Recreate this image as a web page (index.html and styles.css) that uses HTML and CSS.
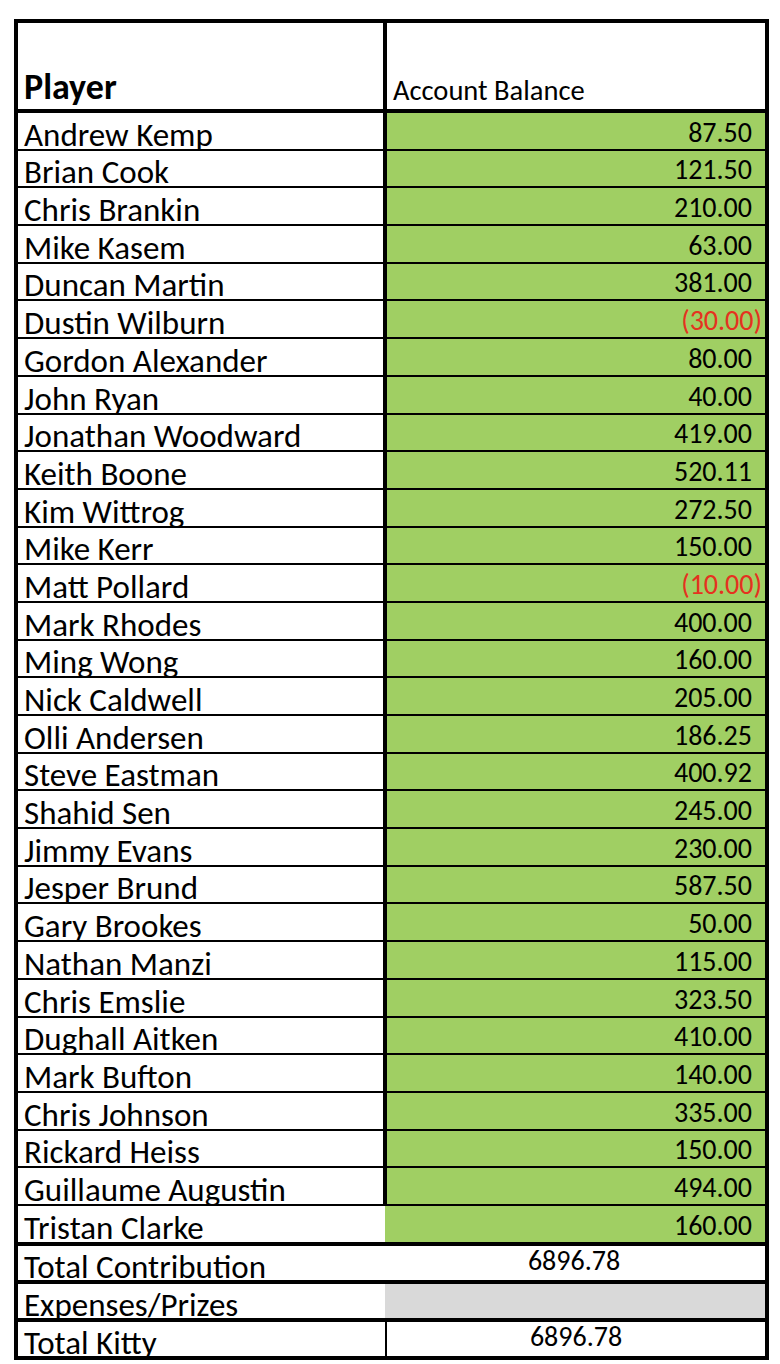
FILE: index.html
```html
<!DOCTYPE html>
<html lang="en">
<head>
<meta charset="utf-8">
<title>Account Balances</title>
<link rel="stylesheet" href="styles.css">
</head>
<body>
<div class="sheet">
  <div class="row row--head">
    <div class="name"><span class="txt txt--player">Player</span></div>
    <div class="val val--head"><span class="txt txt--label">Account Balance</span></div>
  </div>

  <div class="row"><div class="name"><span class="txt">Andrew Kemp</span></div><div class="val"><span class="num">87.50</span></div></div>
  <div class="row"><div class="name"><span class="txt">Brian Cook</span></div><div class="val"><span class="num">121.50</span></div></div>
  <div class="row"><div class="name"><span class="txt">Chris Brankin</span></div><div class="val"><span class="num">210.00</span></div></div>
  <div class="row"><div class="name"><span class="txt">Mike Kasem</span></div><div class="val"><span class="num">63.00</span></div></div>
  <div class="row"><div class="name"><span class="txt">Duncan Martin</span></div><div class="val"><span class="num">381.00</span></div></div>
  <div class="row"><div class="name"><span class="txt">Dustin Wilburn</span></div><div class="val"><span class="num num--neg">(30.00)</span></div></div>
  <div class="row"><div class="name"><span class="txt">Gordon Alexander</span></div><div class="val"><span class="num">80.00</span></div></div>
  <div class="row"><div class="name"><span class="txt">John Ryan</span></div><div class="val"><span class="num">40.00</span></div></div>
  <div class="row"><div class="name"><span class="txt">Jonathan Woodward</span></div><div class="val"><span class="num">419.00</span></div></div>
  <div class="row"><div class="name"><span class="txt">Keith Boone</span></div><div class="val"><span class="num">520.11</span></div></div>
  <div class="row"><div class="name"><span class="txt">Kim Wittrog</span></div><div class="val"><span class="num">272.50</span></div></div>
  <div class="row"><div class="name"><span class="txt">Mike Kerr</span></div><div class="val"><span class="num">150.00</span></div></div>
  <div class="row"><div class="name"><span class="txt">Matt Pollard</span></div><div class="val"><span class="num num--neg">(10.00)</span></div></div>
  <div class="row"><div class="name"><span class="txt">Mark Rhodes</span></div><div class="val"><span class="num">400.00</span></div></div>
  <div class="row"><div class="name"><span class="txt">Ming Wong</span></div><div class="val"><span class="num">160.00</span></div></div>
  <div class="row"><div class="name"><span class="txt">Nick Caldwell</span></div><div class="val"><span class="num">205.00</span></div></div>
  <div class="row"><div class="name"><span class="txt">Olli Andersen</span></div><div class="val"><span class="num">186.25</span></div></div>
  <div class="row"><div class="name"><span class="txt">Steve Eastman</span></div><div class="val"><span class="num">400.92</span></div></div>
  <div class="row"><div class="name"><span class="txt">Shahid Sen</span></div><div class="val"><span class="num">245.00</span></div></div>
  <div class="row"><div class="name"><span class="txt">Jimmy Evans</span></div><div class="val"><span class="num">230.00</span></div></div>
  <div class="row"><div class="name"><span class="txt">Jesper Brund</span></div><div class="val"><span class="num">587.50</span></div></div>
  <div class="row"><div class="name"><span class="txt">Gary Brookes</span></div><div class="val"><span class="num">50.00</span></div></div>
  <div class="row"><div class="name"><span class="txt">Nathan Manzi</span></div><div class="val"><span class="num">115.00</span></div></div>
  <div class="row"><div class="name"><span class="txt">Chris Emslie</span></div><div class="val"><span class="num">323.50</span></div></div>
  <div class="row"><div class="name"><span class="txt">Dughall Aitken</span></div><div class="val"><span class="num">410.00</span></div></div>
  <div class="row"><div class="name"><span class="txt">Mark Bufton</span></div><div class="val"><span class="num">140.00</span></div></div>
  <div class="row"><div class="name"><span class="txt">Chris Johnson</span></div><div class="val"><span class="num">335.00</span></div></div>
  <div class="row"><div class="name"><span class="txt">Rickard Heiss</span></div><div class="val"><span class="num">150.00</span></div></div>
  <div class="row"><div class="name"><span class="txt">Guillaume Augustin</span></div><div class="val"><span class="num">494.00</span></div></div>
  <div class="row row--last"><div class="name"><span class="txt">Tristan Clarke</span></div><div class="val val--open"><span class="num">160.00</span></div></div>

  <div class="row row--total"><div class="name"><span class="txt txt--total">Total Contribution</span></div><div class="val val--sum"><span class="num num--center">6896.78</span></div></div>
  <div class="row row--total"><div class="name"><span class="txt txt--total">Expenses/Prizes</span></div><div class="val val--open val--grey"></div></div>
  <div class="row row--total row--end"><div class="name"><span class="txt txt--total">Total Kitty</span></div><div class="val val--sum val--thin"><span class="num num--center">6896.78</span></div></div>
</div>
</body>
</html>
```

FILE: styles.css
```css
html, body {
  margin: 0;
  padding: 0;
  background: #ffffff;
}

body {
  font-family: Carlito, Calibri, Lato, "Liberation Sans", sans-serif;
  color: #000000;
}

.sheet {
  margin: 19px 0 0 14px;
  width: 755px;
  border: 4px solid #000000;
  box-sizing: border-box;
}

.row {
  display: grid;
  grid-template-columns: 365px 1fr;
  height: 37.7px;
  border-bottom: 2px solid #000000;
  box-sizing: border-box;
}

.row--head {
  height: 90px;
  border-bottom-width: 4px;
}

.row--last {
  height: 39.7px;
  border-bottom-width: 4px;
}

.row--total {
  height: 38px;
  border-bottom-width: 4px;
}

.row--end {
  height: 34px;
  border-bottom: 0;
}

.name,
.val {
  display: flex;
  align-items: flex-end;
  min-width: 0;
}

.name {
  padding-left: 6px;
}

.val {
  background: #a0cf63;
  border-left: 4px solid #000000;
  justify-content: flex-end;
  padding-right: 3px;
}

.val--head {
  background: #ffffff;
  justify-content: flex-start;
  padding-left: 6px;
}

.val--open {
  border-left: 0;
  margin-left: 2px;
}

.val--grey {
  background: #d9d9d9;
}

.val--sum {
  background: #ffffff;
  border-left: 0;
  justify-content: center;
  padding-right: 0;
}

.val--thin {
  margin-left: 2px;
  border-left: 2px solid #000000;
}

.txt {
  font-size: 33px;
  line-height: 1;
  white-space: nowrap;
  margin-bottom: -3px;
}

.txt--total {
  margin-bottom: -4px;
}

.txt--player {
  font-size: 36px;
  font-weight: bold;
  margin-bottom: 4px;
}

.txt--label {
  font-size: 28.5px;
  margin-bottom: 4px;
}

.num {
  font-size: 28px;
  line-height: 1;
  white-space: nowrap;
  padding-right: 10px;
  margin-bottom: 2px;
}

.num--neg {
  color: #e5321f;
  padding-right: 0;
}

.num--center {
  padding-right: 0;
  margin-bottom: 5px;
}
```
